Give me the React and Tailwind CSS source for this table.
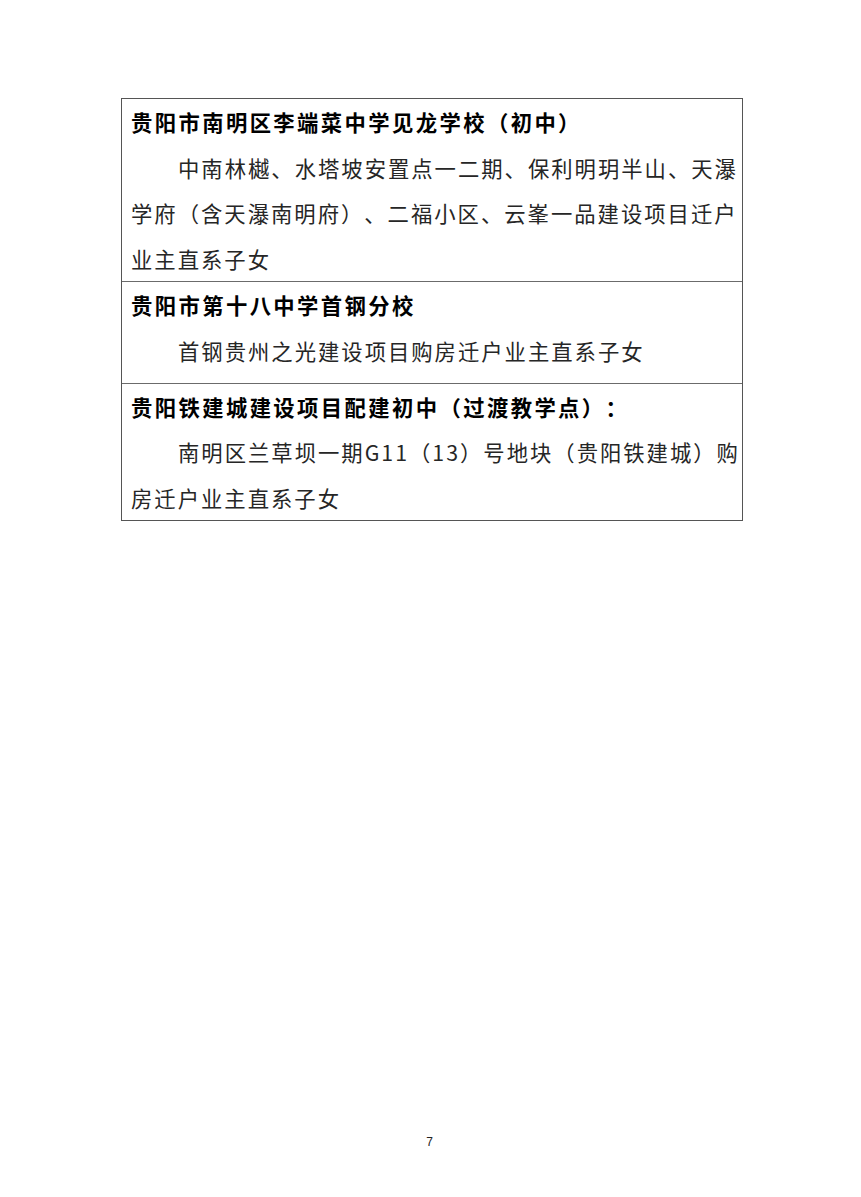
const cjk = { fontFamily: '"Noto Sans CJK SC", "Noto Sans", sans-serif' };

function Line({ children, full = false, indent = false, bold = false }) {
  return (
    <div
      lang="zh-CN"
      className={`h-[45.6px] whitespace-nowrap text-[21.33px] leading-[45.6px] [text-spacing-trim:space-all] ${
        full ? "text-justify [text-align-last:justify]" : "text-left"
      } ${indent ? "pl-[47px]" : ""} ${
        bold
          ? "font-bold tracking-[2.4px] text-black"
          : "font-normal tracking-[2px] text-[#262626]"
      }`}
    >
      {children}
    </div>
  );
}

function Row({ last = false, extra = "", children }) {
  return (
    <div
      className={`pl-[9px] pr-[7px] ${last ? "" : "border-b border-[#6b6b6b]"} ${extra}`}
    >
      {children}
    </div>
  );
}

export default function App() {
  return (
    <div className="min-h-[1197px] w-[861px] bg-white pt-[98px]" style={cjk}>
      <div className="ml-[121px] w-[622px] border border-[#555]">
        <Row>
          <Line bold>贵阳市南明区李端菜中学见龙学校（初中）</Line>
          <Line full indent>
            中南林樾、水塔坡安置点一二期、保利明玥半山、天瀑
          </Line>
          <Line full>学府（含天瀑南明府）、二福小区、云峯一品建设项目迁户</Line>
          <Line>业主直系子女</Line>
        </Row>
        <Row extra="pb-[9px]">
          <Line bold>贵阳市第十八中学首钢分校</Line>
          <Line indent>首钢贵州之光建设项目购房迁户业主直系子女</Line>
        </Row>
        <Row last>
          <Line bold>贵阳铁建城建设项目配建初中（过渡教学点）：</Line>
          <Line full indent>
            南明区兰草坝一期G11（13）号地块（贵阳铁建城）购
          </Line>
          <Line>房迁户业主直系子女</Line>
        </Row>
      </div>
      <div
        className="mt-[613px] text-center text-[12px] leading-[16px] text-[#222]"
        style={{ fontFamily: '"Liberation Sans", Arial, sans-serif', paddingRight: "2px" }}
      >
        7
      </div>
    </div>
  );
}
